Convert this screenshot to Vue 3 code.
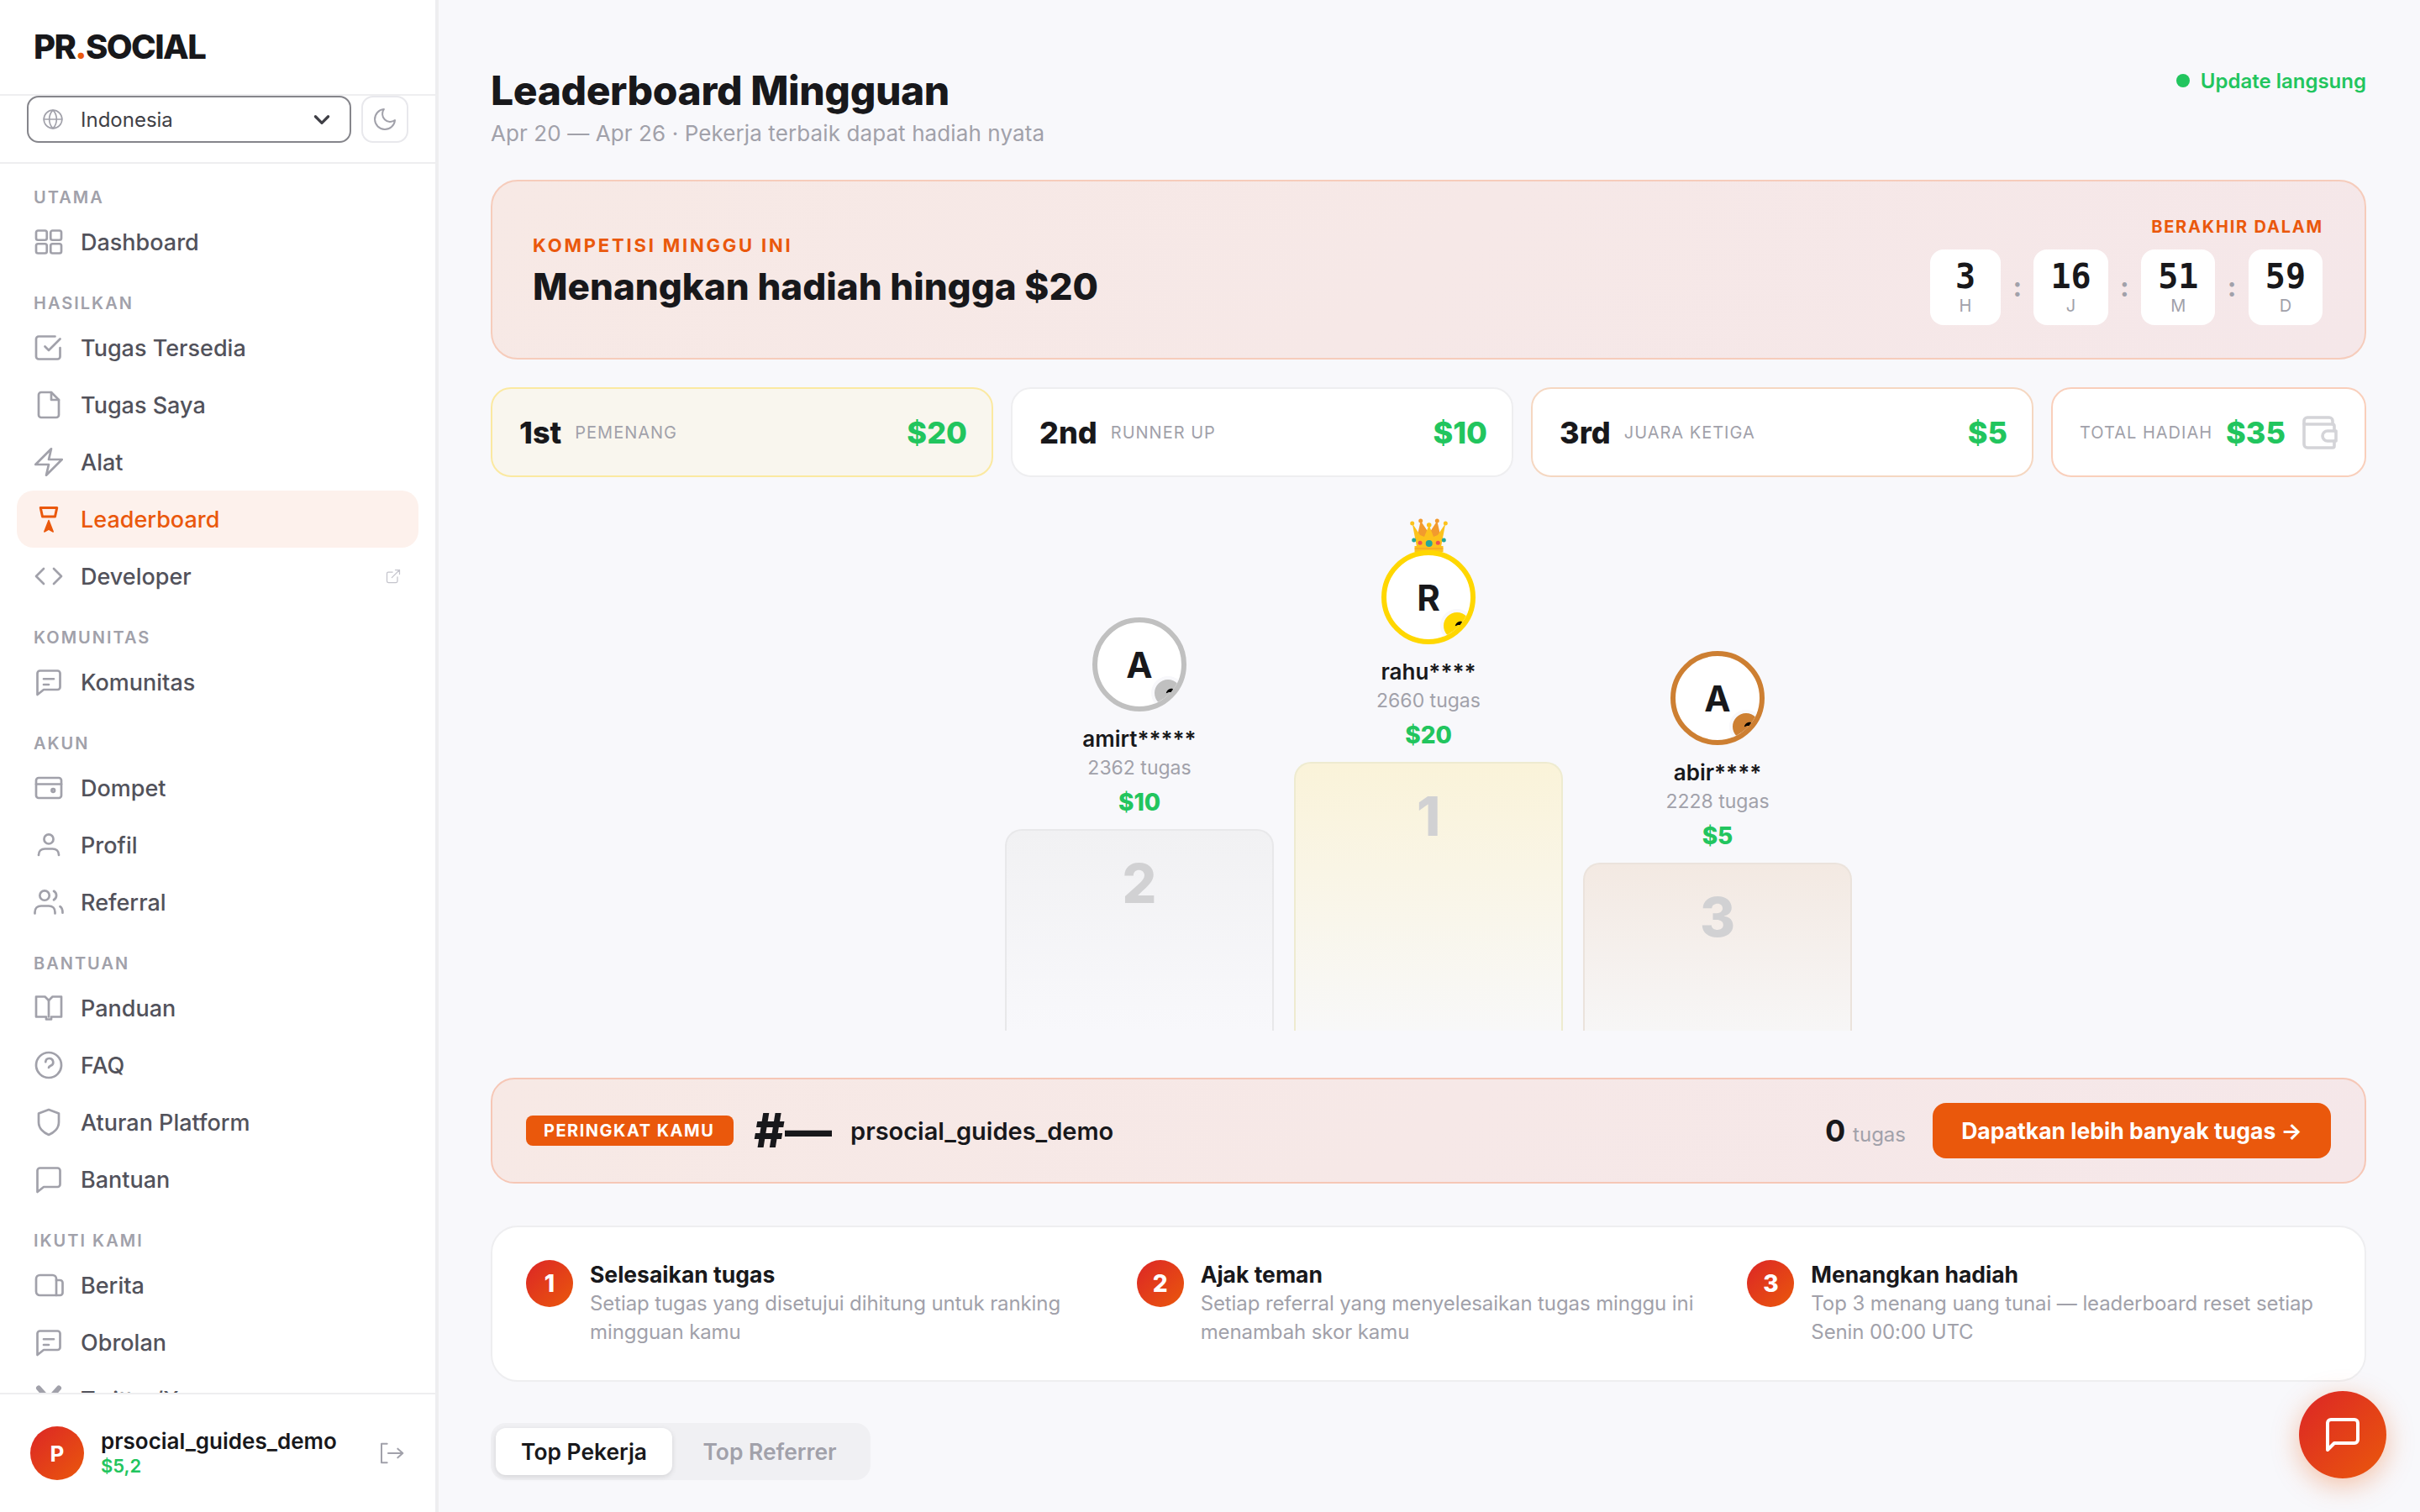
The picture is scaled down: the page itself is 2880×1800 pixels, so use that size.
<script setup>
const icons = {
  grid: '<rect x="2" y="3" width="8.5" height="7.5" rx="1.5"/><rect x="13.5" y="3" width="8.5" height="7.5" rx="1.5"/><rect x="2" y="13.5" width="8.5" height="7.5" rx="1.5"/><rect x="13.5" y="13.5" width="8.5" height="7.5" rx="1.5"/>',
  check: '<polyline points="9 11 12 14 21 5"/><path d="M21 12v7a2 2 0 0 1-2 2H4a2 2 0 0 1-2-2V5a2 2 0 0 1 2-2h13"/>',
  file: '<path d="M14 2H6a2 2 0 0 0-2 2v16a2 2 0 0 0 2 2h12a2 2 0 0 0 2-2V8z"/><polyline points="14 2 14 8 20 8"/>',
  zap: '<polygon points="14 1.500 1.500 14 12 14 10 22.500 22.500 10 12 10 14 1.500"/>',
  trophy: '<path d="M5.500 3h13l-1.500 7H7z"/><path d="M12 13l3.500 9-3.500-2-3.500 2z" fill="currentColor" stroke-width="1"/>',
  code: '<polyline points="16 18 22 12 16 6"/><polyline points="8 6 2 12 8 18"/>',
  chat: '<path d="M3 5a2 2 0 0 1 2-2h14a2 2 0 0 1 2 2v11a2 2 0 0 1-2 2H8l-5 4z"/><path d="M8 9.500h8M8 14h4"/>',
  wallet: '<rect x="2" y="4" width="20" height="16" rx="2"/><path d="M2 9h20"/><circle cx="15.500" cy="14" r="1.200"/>',
  user: '<circle cx="12" cy="7.300" r="3.700"/><path d="M4 20c0-3 2-5 5-5h6c3 0 5 2 5 5"/>',
  users: '<circle cx="8.700" cy="6.700" r="3.800"/><path d="M1 21v-1c0-3 2-5 5-5h6c3 0 5 2 5 5v1"/><path d="M16 3.200a4 4 0 0 1 0 7"/><path d="M21 15.500c1.500.800 2 2.800 2 5"/>',
  book: '<path d="M2 3h7l3 3 3-3h7v16h-8v2h-4v-2H2z"/><path d="M12 6v13"/>',
  help: '<circle cx="12" cy="12" r="10"/><path d="M9.500 9.500a3 3 0 1 1 4 3c-1 .5-1.500 1-1.500 1.500"/>',
  shield: '<path d="M12 2l8 3v7c0 5-4 8.500-8 10-4-1.500-8-5-8-10V5z"/>',
  bubble: '<path d="M3 5a2 2 0 0 1 2-2h14a2 2 0 0 1 2 2v11a2 2 0 0 1-2 2H8l-5 4z"/>',
  news: '<path d="M5 4h10a3 3 0 0 1 3 3v13H5a3 3 0 0 1-3-3V7a3 3 0 0 1 3-3z"/><path d="M18 8h3a2 2 0 0 1 2 2v8a2 2 0 0 1-2 2h-3"/>',
  x: '<path d="M4 3l16 18M20 3L4 21" stroke-width="4"/>',
}

const nav = [
  { label: 'Utama', items: [{ name: 'Dashboard', icon: 'grid' }] },
  {
    label: 'Hasilkan',
    items: [
      { name: 'Tugas Tersedia', icon: 'check' },
      { name: 'Tugas Saya', icon: 'file' },
      { name: 'Alat', icon: 'zap' },
      { name: 'Leaderboard', icon: 'trophy', active: true },
      { name: 'Developer', icon: 'code', external: true },
    ],
  },
  { label: 'Komunitas', items: [{ name: 'Komunitas', icon: 'chat' }] },
  {
    label: 'Akun',
    items: [
      { name: 'Dompet', icon: 'wallet' },
      { name: 'Profil', icon: 'user' },
      { name: 'Referral', icon: 'users' },
    ],
  },
  {
    label: 'Bantuan',
    items: [
      { name: 'Panduan', icon: 'book' },
      { name: 'FAQ', icon: 'help' },
      { name: 'Aturan Platform', icon: 'shield' },
      { name: 'Bantuan', icon: 'bubble' },
    ],
  },
  {
    label: 'Ikuti Kami',
    items: [
      { name: 'Berita', icon: 'news' },
      { name: 'Obrolan', icon: 'chat' },
      { name: 'Twitter/X', icon: 'x' },
    ],
  },
]

const countdown = [
  { value: '3', unit: 'H' },
  { value: '16', unit: 'J' },
  { value: '51', unit: 'M' },
  { value: '59', unit: 'D' },
]

const prizes = [
  { place: '1st', label: 'PEMENANG', amount: '$20', cls: 'gold' },
  { place: '2nd', label: 'RUNNER UP', amount: '$10', cls: 'silver' },
  { place: '3rd', label: 'JUARA KETIGA', amount: '$5', cls: 'bronze' },
]

const podium = [
  { rank: 2, initial: 'A', name: 'amirt*****', tasks: '2362 tugas', prize: '$10', cls: 'second', height: 240 },
  { rank: 1, initial: 'R', name: 'rahu****', tasks: '2660 tugas', prize: '$20', cls: 'first', height: 320 },
  { rank: 3, initial: 'A', name: 'abir****', tasks: '2228 tugas', prize: '$5', cls: 'third', height: 200 },
]

const steps = [
  { title: 'Selesaikan tugas', text: 'Setiap tugas yang disetujui dihitung untuk ranking mingguan kamu' },
  { title: 'Ajak teman', text: 'Setiap referral yang menyelesaikan tugas minggu ini menambah skor kamu' },
  { title: 'Menangkan hadiah', text: 'Top 3 menang uang tunai — leaderboard reset setiap Senin 00:00 UTC' },
]
</script>

<template>
  <div class="shell">
    <aside class="sidebar">
      <div class="logo">PR<span>.</span>SOCIAL</div>
      <div class="lang-row">
        <div class="select">
          <svg class="globe" viewBox="0 0 24 24"><circle cx="12" cy="12" r="10"/><path d="M2 12h20M12 2c3 3 4 6.500 4 10s-1 7-4 10c-3-3-4-6.500-4-10s1-7 4-10z"/></svg>
          <span>Indonesia</span>
          <svg class="caret" viewBox="0 0 24 24"><polyline points="5 9 12 16 19 9"/></svg>
        </div>
        <button class="moon">
          <svg viewBox="0 0 24 24"><path d="M21 12.800A9 9 0 1 1 11.200 3a7 7 0 0 0 9.800 9.800z"/></svg>
        </button>
      </div>
      <nav class="nav">
        <section v-for="group in nav" :key="group.label" class="group">
          <div class="group-label">{{ group.label }}</div>
          <a v-for="item in group.items" :key="item.name" class="nav-item" :class="{ active: item.active }">
            <svg class="nav-icon" viewBox="0 0 24 24" v-html="icons[item.icon]"></svg>
            <span>{{ item.name }}</span>
            <svg v-if="item.external" class="ext" viewBox="0 0 24 24"><path d="M18 13v6a2 2 0 0 1-2 2H5a2 2 0 0 1-2-2V8a2 2 0 0 1 2-2h6"/><path d="M15 3h6v6M10 14L21 3"/></svg>
          </a>
        </section>
      </nav>
      <div class="account">
        <div class="account-avatar">P</div>
        <div class="account-info">
          <div class="account-name">prsocial_guides_demo</div>
          <div class="account-balance">$5,2</div>
        </div>
        <svg class="logout" viewBox="0 0 24 24"><path d="M8 3.500H3v17h5"/><path d="M9 12h13M17.500 8l4.500 4-4.500 4"/></svg>
      </div>
    </aside>

    <main class="main">
      <header class="head">
        <div>
          <h1>Leaderboard Mingguan</h1>
          <p>Apr 20 — Apr 26 · Pekerja terbaik dapat hadiah nyata</p>
        </div>
        <div class="live"><i></i>Update langsung</div>
      </header>

      <section class="hero">
        <div class="hero-text">
          <div class="eyebrow">KOMPETISI MINGGU INI</div>
          <h2>Menangkan hadiah hingga $20</h2>
        </div>
        <div class="timer">
          <div class="timer-label">BERAKHIR DALAM</div>
          <div class="timer-row">
            <template v-for="(c, i) in countdown" :key="c.unit">
              <span v-if="i" class="colon">:</span>
              <div class="time-box">
                <b>{{ c.value }}</b>
                <small>{{ c.unit }}</small>
              </div>
            </template>
          </div>
        </div>
      </section>

      <section class="prizes">
        <div v-for="p in prizes" :key="p.place" class="prize" :class="p.cls">
          <strong>{{ p.place }}</strong>
          <span>{{ p.label }}</span>
          <em>{{ p.amount }}</em>
        </div>
        <div class="prize total">
          <span>TOTAL HADIAH</span>
          <em>$35</em>
          <svg viewBox="0 0 24 24"><path d="M20 7V5a2 2 0 0 0-2-2H5a2 2 0 0 0-2 2v14a2 2 0 0 0 2 2h15a1 1 0 0 0 1-1v-3"/><path d="M3 7h17a1 1 0 0 1 1 1v3"/><path d="M22 11h-5a1.500 1.500 0 0 0 0 6h5z"/></svg>
        </div>
      </section>

      <section class="podium">
        <div v-for="p in podium" :key="p.rank" class="column" :class="p.cls">
          <svg v-if="p.rank === 1" class="crown" viewBox="0 0 45 40">
            <path d="M8 24L12.700 3 22.700 18 32.300 3 37 24z" fill="#f29a2e"/>
            <path d="M8 34L2.700 6 12 20l5 2 5.700-14L28 22l5-2 9.300-14L37 34z" fill="#fcc21b"/>
            <path d="M5.500 33h34v7h-34z" fill="#fcc21b"/>
            <path d="M6 36h33" stroke="#f29a2e" stroke-width="1" fill="none"/>
            <circle cx="2.700" cy="6" r="2.500" fill="#fcc21b"/><circle cx="42.300" cy="6" r="2.500" fill="#fcc21b"/>
            <circle cx="12.700" cy="3" r="2.500" fill="#f29a2e"/><circle cx="32.300" cy="3" r="2.500" fill="#f29a2e"/><circle cx="22.700" cy="8" r="2.800" fill="#fcc21b"/>
            <circle cx="22.700" cy="30" r="4" fill="#26a69a"/>
            <circle cx="12" cy="29.300" r="2.500" fill="#ef5350"/><circle cx="33.300" cy="29.300" r="2.500" fill="#ef5350"/>
            <circle cx="4.700" cy="26" r="2.500" fill="#26a69a"/><circle cx="40.300" cy="26" r="2.500" fill="#26a69a"/>
          </svg>
          <div class="avatar">
            {{ p.initial }}
            <span class="medal"><svg viewBox="0 0 14 10"><path d="M1 9C2 4 6 1 10 1c2 0 3 1 3 2-2 1-3 3-3 5-1-1-2-1-3-1-2 0-4 1-6 2z"/></svg></span>
          </div>
          <div class="name">{{ p.name }}</div>
          <div class="tasks">{{ p.tasks }}</div>
          <div class="won">{{ p.prize }}</div>
          <div class="block" :style="{ height: p.height + 'px' }">{{ p.rank }}</div>
        </div>
      </section>

      <section class="rank">
        <span class="rank-badge">PERINGKAT KAMU</span>
        <span class="rank-no">#—</span>
        <span class="rank-name">prsocial_guides_demo</span>
        <span class="rank-count"><b>0</b> tugas</span>
        <button class="rank-btn">Dapatkan lebih banyak tugas →</button>
      </section>

      <section class="steps">
        <div v-for="(s, i) in steps" :key="s.title" class="step">
          <div class="step-no">{{ i + 1 }}</div>
          <div>
            <h3>{{ s.title }}</h3>
            <p>{{ s.text }}</p>
          </div>
        </div>
      </section>

      <div class="tabs">
        <button class="tab on">Top Pekerja</button>
        <button class="tab">Top Referrer</button>
      </div>
    </main>

    <button class="fab">
      <svg viewBox="0 0 24 24"><path d="M21 15a2 2 0 0 1-2 2H7l-4 4V5a2 2 0 0 1 2-2h14a2 2 0 0 1 2 2z"/></svg>
    </button>
  </div>
</template>

<style>
html, body { margin: 0; background: #f8f8fb; }
</style>

<style scoped>
.shell {
  display: flex;
  height: 1800px;
  overflow: hidden;
  font-family: Inter, "Liberation Sans", sans-serif;
  color: #18181b;
  background: #f8f8fb;
}
svg { fill: none; stroke: currentColor; stroke-width: 2; stroke-linecap: round; stroke-linejoin: round; }
button { font-family: inherit; border: 0; }

.sidebar {
  width: 520px;
  flex: none;
  box-sizing: border-box;
  border-right: 2px solid #eeeef0;
  background: #fff;
  display: flex;
  flex-direction: column;
  box-shadow: 2px 0 0 #eeeef0;
}
.logo {
  height: 114px;
  flex: none;
  box-sizing: border-box;
  padding: 32px 0 0 40px;
  border-bottom: 2px solid #eeeef0;
  font-size: 40px;
  line-height: 48px;
  font-weight: 800;
  letter-spacing: -1.6px;
}
.logo span { color: #ea580c; }
.lang-row {
  flex: none;
  display: flex;
  gap: 12px;
  height: 81px;
  box-sizing: border-box;
  padding: 0 32px;
  border-bottom: 2px solid #eeeef0;
}
.select {
  width: 386px;
  height: 56px;
  box-sizing: border-box;
  border: 2px solid #85858b;
  border-radius: 14px;
  display: flex;
  align-items: center;
  padding: 0 16px;
  font-size: 24px;
  color: #3f3f46;
}
.globe { width: 26px; height: 26px; color: #a1a1aa; stroke-width: 1.5; margin-right: 20px; }
.caret { width: 26px; height: 26px; margin-left: auto; margin-right: 4px; stroke-width: 3; color: #3f3f46; }
.moon {
  width: 56px;
  height: 56px;
  box-sizing: border-box;
  border: 2px solid #e8e8ec;
  border-radius: 14px;
  background: #fff;
  padding: 0;
  display: flex;
  align-items: center;
  justify-content: center;
  color: #a1a1aa;
}
.moon svg { width: 32px; height: 32px; stroke-width: 1.5; }

.nav { flex: 1; min-height: 0; overflow: hidden; padding-top: 25px; }
.group { margin-bottom: 24px; }
.group-label {
  height: 30px;
  line-height: 30px;
  margin-bottom: 4px;
  padding-left: 40px;
  font-size: 20px;
  font-weight: 600;
  letter-spacing: 2px;
  text-transform: uppercase;
  color: #a1a1aa;
}
.nav-item {
  height: 68px;
  margin: 0 20px;
  padding: 0 20px;
  border-radius: 20px;
  display: flex;
  align-items: center;
  gap: 20px;
  font-size: 27px;
  font-weight: 500;
  color: #52525b;
}
.nav-icon { width: 36px; height: 36px; color: #a1a1aa; stroke-width: 1.8; flex: none; }
.nav-item.active { background: #fdf1ec; color: #ea580c; }
.nav-item.active .nav-icon { color: #ea580c; stroke-width: 2; }
.ext { width: 20px; height: 20px; margin-left: auto; color: #c4c4cc; stroke-width: 1.5; }

.account {
  height: 142px;
  flex: none;
  box-sizing: border-box;
  border-top: 2px solid #eeeef0;
  background: #fff;
  display: flex;
  align-items: center;
  padding: 0 36px;
}
.account-avatar {
  width: 64px;
  height: 64px;
  border-radius: 50%;
  background: linear-gradient(135deg, #dc2626, #ea580c);
  color: #fff;
  font-size: 26px;
  font-weight: 700;
  display: flex;
  align-items: center;
  justify-content: center;
  margin-right: 20px;
}
.account-name { font-size: 26px; line-height: 30px; font-weight: 600; }
.account-balance { font-size: 22px; line-height: 28px; font-weight: 600; color: #22c55e; }
.logout { width: 32px; height: 32px; margin-left: auto; color: #a1a1aa; stroke-width: 1.5; }

.main { flex: 1; min-width: 0; padding: 77px 64px 0; }
.head { display: flex; justify-content: space-between; align-items: flex-start; height: 137px; }
.head h1 { margin: 0; font-size: 48px; line-height: 62px; font-weight: 800; letter-spacing: -0.4px; }
.head p { margin: 0; font-size: 26px; line-height: 40px; letter-spacing: 0.1px; color: #a1a1aa; }
.live { display: flex; align-items: center; gap: 13px; font-size: 24px; font-weight: 600; color: #22c55e; height: 38px; }
.live i { width: 16px; height: 16px; border-radius: 50%; background: #22c55e; }

.hero {
  height: 214px;
  box-sizing: border-box;
  border: 2px solid #f6ccbb;
  border-radius: 32px;
  background: linear-gradient(135deg, #f7e9e5, #f5e7e9);
  padding: 0 50px 0 48px;
  display: flex;
  justify-content: space-between;
  align-items: center;
}
.hero-text { padding-top: 4px; }
.eyebrow { font-size: 22px; line-height: 30px; font-weight: 700; letter-spacing: 2.800px; color: #ea580c; }
.hero h2 { margin: 5px 0 0; font-size: 44px; line-height: 58px; font-weight: 800; }
.timer { display: flex; flex-direction: column; align-items: flex-end; }
.timer-label { font-size: 20px; line-height: 28px; font-weight: 700; letter-spacing: 1.800px; color: #ea580c; margin-bottom: 13px; margin-right: -1px; }
.timer-row { display: flex; align-items: center; }
.time-box {
  height: 90px;
  min-width: 84px;
  padding: 0 20px;
  box-sizing: border-box;
  background: #fff;
  border-radius: 16px;
  text-align: center;
  display: flex;
  flex-direction: column;
  align-items: center;
}
.time-box b { font-family: "DejaVu Sans Mono", monospace; font-size: 40px; line-height: 46px; font-weight: 700; margin-top: 9px; }
.time-box small { font-size: 20px; line-height: 24px; color: #a1a1aa; }
.colon { width: 39.500px; text-align: center; font-size: 32px; font-weight: 700; color: #a1a1aa; }

.prizes { display: grid; grid-template-columns: 1fr 1fr 1fr 375px; gap: 21px; margin-top: 33px; }
.prize {
  height: 107px;
  box-sizing: border-box;
  border: 2px solid #eeeef0;
  border-radius: 24px;
  background: #fff;
  display: flex;
  align-items: center;
  padding: 0 29px 0 32px;
  gap: 16px;
}
.prize strong { font-size: 36px; font-weight: 800; white-space: nowrap; }
.prize span { font-size: 20px; letter-spacing: 1px; color: #a1a1aa; white-space: nowrap; }
.prize em { font-style: normal; margin-left: auto; font-size: 36px; font-weight: 800; color: #22c55e; }
.gold { background: #f9f6ee; border-color: #fbe9a1; }
.bronze { border-color: #f5d7c1; }
.total { border-color: #f9cfbb; padding-right: 32px; }
.total em { margin-left: 0; }
.total svg { width: 48px; height: 48px; color: #d4d4d8; stroke-width: 1.8; margin-left: auto; margin-right: -2px; }

.podium { display: flex; justify-content: center; align-items: flex-end; gap: 24px; height: 659px; overflow: hidden; }
.column { width: 320px; display: flex; flex-direction: column; align-items: center; }
.crown { width: 45px; height: 40px; stroke: none; margin-bottom: -2px; }
.avatar {
  position: relative;
  width: 112px;
  height: 112px;
  box-sizing: border-box;
  border: 6px solid;
  border-radius: 50%;
  background: #fff;
  overflow: hidden;
  display: flex;
  align-items: center;
  justify-content: center;
  font-size: 42px;
  font-weight: 700;
}
.medal {
  position: absolute;
  right: -4px;
  bottom: -4px;
  width: 40px;
  height: 40px;
  box-sizing: border-box;
  border-radius: 50%;
  border: 4px solid #f8f8fb;
  display: flex;
  align-items: center;
  justify-content: center;
}
.medal svg { width: 10px; height: 7px; stroke: none; fill: #000; transform: translate(2px, -3px); }
.first .avatar { border-color: #ffd700; }
.first .medal { background: #ffd700; }
.second .avatar { border-color: #c0c0c0; }
.second .medal { background: #c0c0c0; }
.third .avatar { border-color: #cd7f32; }
.third .medal { background: #cd7f32; }
.name { margin-top: 16px; font-size: 26px; line-height: 34px; font-weight: 600; }
.tasks { font-size: 23px; line-height: 34px; color: #a1a1aa; }
.won { margin-top: 4px; font-size: 28px; line-height: 40px; font-weight: 800; color: #22c55e; }
.block {
  margin-top: 12px;
  width: 320px;
  box-sizing: border-box;
  border: 2px solid #e8e8ea;
  border-bottom: 0;
  border-radius: 20px 20px 0 0;
  padding-top: 19px;
  text-align: center;
  font-size: 64px;
  line-height: 88px;
  font-weight: 800;
  color: #d1d1d3;
}
.first .block { background: linear-gradient(180deg, #faf3d9, #f8f8f8); border-color: #eeebd0; }
.second .block { background: linear-gradient(180deg, #f1f1f3, #f8f8fb); }
.third .block { background: linear-gradient(180deg, #f3e9e2, #f7f6f6); border-color: #ebe3dc; }

.rank {
  margin-top: 56px;
  height: 126px;
  box-sizing: border-box;
  border: 2px solid #f6c7b6;
  border-radius: 28px;
  background: linear-gradient(135deg, #f7e9e5, #f5e7e9);
  padding: 0 40px;
  display: flex;
  align-items: center;
}
.rank-badge { background: #ea580c; color: #fff; border-radius: 8px; height: 36px; line-height: 36px; padding: 0 23px 0 21px; font-size: 20px; font-weight: 700; letter-spacing: 1.500px; }
.rank-no { margin-left: 24px; font-size: 56px; font-weight: 800; }
.rank-name { margin-left: 22px; font-size: 29px; font-weight: 600; }
.rank-count { margin-left: auto; font-size: 24px; color: #a1a1aa; }
.rank-count b { font-size: 36px; font-weight: 700; color: #18181b; margin-right: 2px; }
.rank-btn { margin-left: 32px; height: 66px; width: 474px; border-radius: 16px; background: #ea580c; color: #fff; font-size: 26.500px; font-weight: 700; }

.steps {
  margin-top: 50px;
  height: 186px;
  box-sizing: border-box;
  border: 2px solid #eeeef0;
  border-radius: 32px;
  background: #fff;
  padding: 39px 40px;
  display: grid;
  grid-template-columns: repeat(3, 1fr);
  gap: 32px;
}
.step { display: flex; gap: 20px; align-items: flex-start; }
.step-no {
  width: 56px;
  height: 56px;
  flex: none;
  border-radius: 50%;
  background: linear-gradient(135deg, #dc2626, #ea580c);
  color: #fff;
  font-size: 28px;
  font-weight: 800;
  display: flex;
  align-items: center;
  justify-content: center;
}
.step h3 { margin: 0 0 1px; font-size: 26.500px; line-height: 34px; font-weight: 700; }
.step p { margin: 0; font-size: 24px; line-height: 34px; letter-spacing: -0.1px; color: #a1a1aa; }

.tabs { margin-top: 49px; width: 452px; box-sizing: border-box; height: 68px; padding: 6px; background: #f0f0f3; border-radius: 18px; display: flex; }
.tab { flex: 1; height: 56px; border-radius: 12px; background: transparent; font-size: 26.400px; font-weight: 600; color: #a1a1aa; padding: 0 0 0 2px; }
.tab.on { flex: none; width: 210px; padding: 0; background: #fff; color: #18181b; box-shadow: 0 2px 6px rgba(0, 0, 0, 0.12); }

.fab {
  position: fixed;
  right: 40px;
  bottom: 40px;
  width: 104px;
  height: 104px;
  border-radius: 50%;
  background: linear-gradient(135deg, #dc2626, #ea580c);
  box-shadow: 0 8px 32px rgba(234, 88, 12, 0.35);
  color: #fff;
  padding: 0;
  display: flex;
  align-items: center;
  justify-content: center;
}
.fab svg { width: 48px; height: 48px; }
</style>
